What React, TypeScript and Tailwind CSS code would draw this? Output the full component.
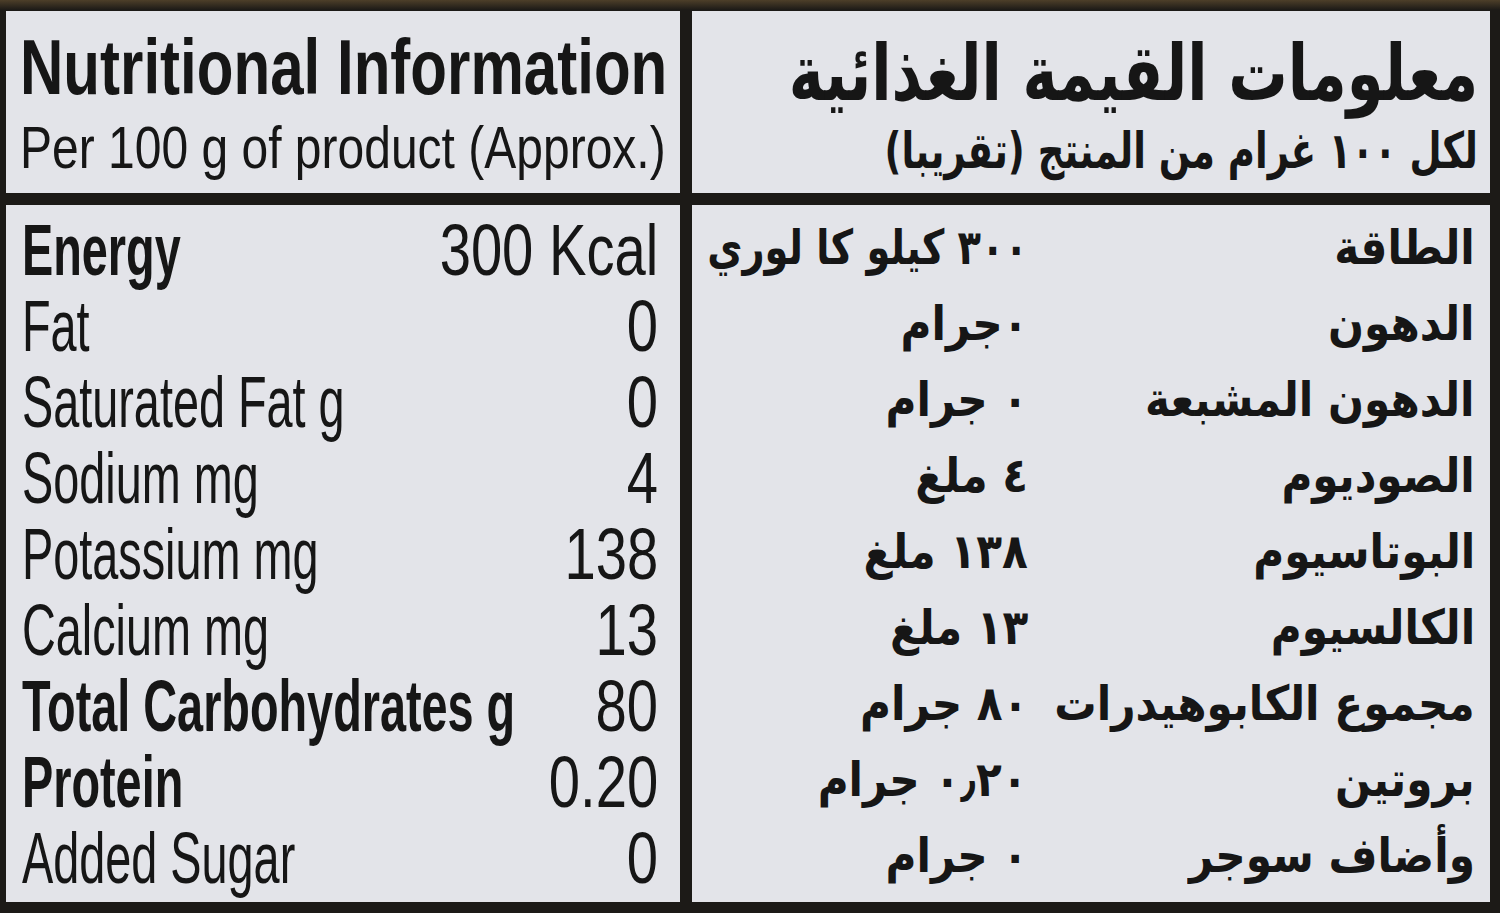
import React from "react";

const latin = { fontFamily: "'Liberation Sans', Arial, sans-serif" };
const arabic = { fontFamily: "'DejaVu Sans', 'Noto Sans', sans-serif" };

const rows = [
  { en: "Energy", val: "300 Kcal", bold: true, ar: "الطاقة", arVal: "٣٠٠ كيلو كا لوري", tight: true },
  { en: "Fat", val: "0", bold: false, ar: "الدهون", arVal: "٠جرام" },
  { en: "Saturated Fat g", val: "0", bold: false, ar: "الدهون المشبعة", arVal: "٠ جرام" },
  { en: "Sodium mg", val: "4", bold: false, ar: "الصوديوم", arVal: "٤ ملغ" },
  { en: "Potassium mg", val: "138", bold: false, ar: "البوتاسيوم", arVal: "١٣٨ ملغ" },
  { en: "Calcium mg", val: "13", bold: false, ar: "الكالسيوم", arVal: "١٣ ملغ" },
  { en: "Total Carbohydrates g", val: "80", bold: true, ar: "مجموع الكابوهيدرات", arVal: "٨٠ جرام" },
  { en: "Protein", val: "0.20", bold: true, ar: "بروتين", arVal: "٠٫٢٠ جرام" },
  { en: "Added Sugar", val: "0", bold: false, ar: "وأضاف سوجر", arVal: "٠ جرام" },
];

export default function App() {
  return (
    <div className="w-full h-[913px] bg-[linear-gradient(to_bottom,#4d3f29_0px,#1c1a17_10px)] pt-[11px] pl-[6px] overflow-hidden text-[#161616]">
      <div className="grid grid-cols-[674px_798px] grid-rows-[182px_697px] gap-[12px]">
        {/* english heading */}
        <div className="bg-[#e3e4e9] pl-[14px] pt-[16px] overflow-hidden whitespace-nowrap" style={latin}>
          <div className="text-[78px] leading-[80px] font-bold">
            <span className="inline-block origin-left scale-x-[0.77]">Nutritional Information</span>
          </div>
          <div className="text-[60px] leading-[64px] mt-[9px]">
            <span className="inline-block origin-left scale-x-[0.8]">Per 100 g of product (Approx.)</span>
          </div>
        </div>

        {/* arabic heading */}
        <div dir="rtl" className="bg-[#e3e4e9] pr-[12px] pt-[17px] overflow-hidden whitespace-nowrap" style={arabic}>
          <div className="text-[78px] leading-[90px] font-bold">
            <span className="inline-block origin-right scale-x-[0.76]">معلومات القيمة الغذائية</span>
          </div>
          <div className="text-[50px] leading-[62px] font-bold mt-[2px]">
            <span className="inline-block origin-right scale-x-[0.74]">لكل ١٠٠ غرام من المنتج (تقريبا)</span>
          </div>
        </div>

        {/* english table */}
        <div className="bg-[#e3e4e9] pl-[16px] pr-[22px] pt-[7px] overflow-hidden" style={latin}>
          {rows.map((r) => (
            <div key={r.en} className="flex text-[72px] leading-[76px] whitespace-nowrap">
              <div className="flex-1 min-w-0">
                <span className={"inline-block origin-left scale-x-[0.65] " + (r.bold ? "font-bold" : "")}>{r.en}</span>
              </div>
              <div className="shrink-0 text-right">
                <span className="inline-block origin-right scale-x-[0.78]">{r.val}</span>
              </div>
            </div>
          ))}
        </div>

        {/* arabic table */}
        <div dir="rtl" className="bg-[#e3e4e9] px-[15px] pt-[4px] overflow-hidden" style={arabic}>
          {rows.map((r) => (
            <div key={r.ar} className="grid grid-cols-[447px_1fr] text-[48px] leading-[76px] font-bold whitespace-nowrap">
              <div className="min-w-0">
                <span className="inline-block origin-right scale-x-[0.88]">{r.ar}</span>
              </div>
              <div className="min-w-0">
                <span className={"inline-block origin-right " + (r.tight ? "scale-x-[0.8]" : "scale-x-[0.88]")}>{r.arVal}</span>
              </div>
            </div>
          ))}
        </div>
      </div>
    </div>
  );
}
